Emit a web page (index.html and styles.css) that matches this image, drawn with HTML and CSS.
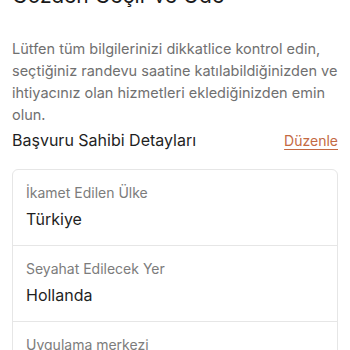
FILE: index.html
```html
<!DOCTYPE html>
<html lang="tr">
<head>
<meta charset="utf-8">
<link rel="stylesheet" href="styles.css">
</head>
<body>
<main class="page">
  <h1 class="title">Gözden Geçir ve Öde</h1>
  <p class="intro">Lütfen tüm bilgilerinizi dikkatlice kontrol edin, seçtiğiniz randevu saatine katılabildiğinizden ve ihtiyacınız olan hizmetleri eklediğinizden emin olun.</p>
  <div class="section-head">
    <h2 class="section-title">Başvuru Sahibi Detayları</h2>
    <a class="edit" href="#">Düzenle</a>
  </div>
  <div class="card">
    <div class="row">
      <div class="label">İkamet Edilen Ülke</div>
      <div class="value">Türkiye</div>
    </div>
    <div class="row">
      <div class="label">Seyahat Edilecek Yer</div>
      <div class="value">Hollanda</div>
    </div>
    <div class="row">
      <div class="label">Uygulama merkezi</div>
      <div class="value">Amsterdam</div>
    </div>
  </div>
</main>
</body>
</html>
```
FILE: styles.css
```css
html, body {
  margin: 0;
  padding: 0;
  background: #ffffff;
  overflow: hidden;
}
body {
  font-family: Inter, "Noto Sans", sans-serif;
  color: #1f1f1f;
}
.page {
  padding: 0 12px;
}
.title {
  margin: -18px 0 0 0;
  font-size: 21px;
  line-height: 28px;
  font-weight: 400;
  color: #1a1a1a;
}
.intro {
  margin: 28px 0 0 0;
  font-size: 14.5px;
  line-height: 22px;
  color: #707070;
}
.section-head {
  display: flex;
  justify-content: space-between;
  align-items: center;
  margin-top: 2px;
}
.section-title {
  margin: 0;
  font-size: 16px;
  line-height: 24px;
  font-weight: 400;
  color: #1f1f1f;
}
.edit {
  font-size: 14px;
  color: #c46a43;
  text-decoration: underline;
  text-underline-offset: 3px;
}
.card {
  margin-top: 17px;
  border: 1px solid #e6e6e6;
  border-radius: 6px;
}
.row {
  padding: 13px 13px 14px;
  border-bottom: 1px solid #e6e6e6;
}
.label {
  font-size: 14px;
  line-height: 20px;
  color: #7c7c7c;
}
.value {
  margin-top: 4px;
  font-size: 16px;
  line-height: 24px;
  color: #1f1f1f;
}
```
